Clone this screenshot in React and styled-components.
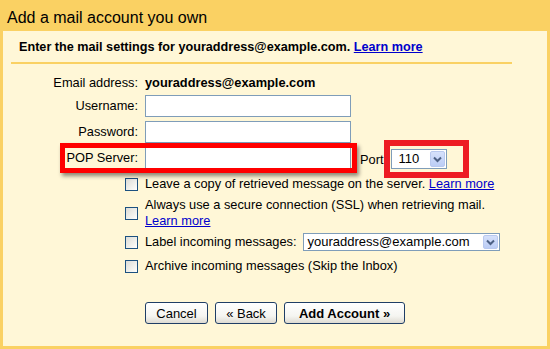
import React from 'react'
import styled, { createGlobalStyle } from 'styled-components'

const GlobalStyle = createGlobalStyle`
   * {
      box-sizing: border-box;
   }
   body {
      margin: 0;
      background: #fad163;
      font-family: 'Liberation Sans', Arial, sans-serif;
      font-size: 12.8px;
      color: #000;
   }
`

function Arrow() {
   return (
      <ArrowBox>
         <svg width="9" height="7" viewBox="0 0 9 7">
            <polyline
               points="1,1.5 4.5,5 8,1.5"
               fill="none"
               stroke="#4d6185"
               strokeWidth="2"
            />
         </svg>
      </ArrowBox>
   )
}

function App() {
   return (
      <Frame>
         <GlobalStyle />
         <Title>Add a mail account you own</Title>
         <Panel>
            <Intro>
               Enter the mail settings for youraddress@example.com.{' '}
               <Link>Learn more</Link>
            </Intro>
            <Form>
               <Row $height={16}>
                  <Label>Email address:</Label>
                  <Value>youraddress@example.com</Value>
               </Row>
               <Row $top={4}>
                  <Label>Username:</Label>
                  <TextInput type="text" />
               </Row>
               <Row $top={4}>
                  <Label>Password:</Label>
                  <TextInput type="password" />
               </Row>
               <Row $top={4}>
                  <PopHighlight>
                     <Label>POP Server:</Label>
                     <TextInput type="text" />
                  </PopHighlight>
                  <PortLabel>Port</PortLabel>
                  <PortHighlight>
                     <Select $width={56} $h={20} $pad={6}>
                        <span>110</span>
                        <Arrow />
                     </Select>
                  </PortHighlight>
               </Row>
               <Row $top={7} $height={16}>
                  <CheckCell>
                     <Check />
                  </CheckCell>
                  <Text>
                     Leave a copy of retrieved message on the server.{' '}
                     <Link $plain>Learn more</Link>
                  </Text>
               </Row>
               <Row $top={5} $height={32}>
                  <CheckCell>
                     <Check />
                  </CheckCell>
                  <Text>
                     Always use a secure connection (SSL) when retrieving mail.
                     <br />
                     <Link $plain>Learn more</Link>
                  </Text>
               </Row>
               <Row $top={4} $height={18}>
                  <CheckCell>
                     <Check />
                  </CheckCell>
                  <Text>Label incoming messages:</Text>
                  <Select $width={197} $h={18} $pad={4} $left={6}>
                     <span>youraddress@example.com</span>
                     <Arrow />
                  </Select>
               </Row>
               <Row $top={7} $height={16}>
                  <CheckCell>
                     <Check />
                  </CheckCell>
                  <Text>Archive incoming messages (Skip the Inbox)</Text>
               </Row>
               <Actions>
                  <Button $width={63}>Cancel</Button>
                  <Button $width={62}>&laquo; Back</Button>
                  <Button $width={121} $primary>
                     Add Account &raquo;
                  </Button>
               </Actions>
            </Form>
         </Panel>
      </Frame>
   )
}

const Frame = styled.div`
   width: 550px;
   height: 349px;
   display: flex;
   flex-direction: column;
   padding: 0 3px 3px;
   background: #fad163;
`

const Title = styled.div`
   padding: 8px 0 3px 4px;
   font-size: 16px;
   line-height: 20px;
`

const Panel = styled.div`
   flex: 1;
   background: #fff7d7;
`

const Intro = styled.div`
   width: 501px;
   margin-left: 8px;
   padding: 8px 0 7px 8px;
   line-height: 16px;
   font-size: 12.65px;
   font-weight: bold;
   border-bottom: 2px solid #fad163;
`

const Link = styled.a`
   color: #00c;
   text-decoration: underline;
   font-weight: ${(p) => (p.$plain ? 'normal' : 'bold')};
   cursor: pointer;
`

const Form = styled.div`
   display: flex;
   flex-direction: column;
   padding-top: 11px;
`

const Row = styled.div`
   display: flex;
   align-items: center;
   height: ${(p) => (p.$height ? `${p.$height}px` : '22px')};
   margin-top: ${(p) => p.$top || 0}px;
   line-height: 16px;
`

const Label = styled.div`
   width: 135px;
   margin-right: 7px;
   text-align: right;
   white-space: nowrap;
`

const Value = styled.div`
   font-weight: bold;
`

const TextInput = styled.input`
   width: 206px;
   height: 22px;
   margin: 0;
   padding: 0 3px;
   border: 1px solid #7f9db9;
   background: #fff;
   font: inherit;
   outline: none;
`

const PopHighlight = styled.div`
   position: relative;
   display: flex;
   align-items: center;

   &::after {
      content: '';
      position: absolute;
      left: 57px;
      right: -6px;
      top: -4px;
      bottom: -4px;
      border: 5px solid #ff0000;
      box-shadow: 2px 3px 4px rgba(0, 0, 0, 0.45);
      pointer-events: none;
   }
`

const PortLabel = styled.div`
   margin: 3px 8px 0 9px;
`

const PortHighlight = styled.div`
   position: relative;
   display: flex;
   margin-top: 2px;

   &::after {
      content: '';
      position: absolute;
      left: -7px;
      right: -22px;
      top: -9px;
      bottom: -9px;
      border: 6px solid #ed1c24;
      pointer-events: none;
   }
`

const Select = styled.div`
   width: ${(p) => p.$width}px;
   height: ${(p) => p.$h}px;
   margin-left: ${(p) => p.$left || 0}px;
   display: flex;
   align-items: center;
   justify-content: space-between;
   padding: 1px 1px 1px ${(p) => p.$pad}px;
   border: 1px solid #7f9db9;
   background: #fff;
   font-size: 13px;
`

const ArrowBox = styled.div`
   width: 15px;
   height: 100%;
   display: flex;
   align-items: center;
   justify-content: center;
   border: 1px solid #b9c9ef;
   border-radius: 2px;
   background: linear-gradient(180deg, #d6e1fb 0%, #bccdf5 100%);
`

const CheckCell = styled.div`
   width: 135px;
   margin-right: 7px;
   display: flex;
   justify-content: flex-end;
`

const Check = styled.span`
   width: 13px;
   height: 13px;
   border: 1px solid #1c5180;
   background: linear-gradient(135deg, #dcdcd7 0%, #f4f4f0 70%, #fff 100%);
`

const Text = styled.div`
   white-space: nowrap;
`

const Actions = styled.div`
   display: flex;
   gap: 7px;
   margin: 28px 0 0 142px;
`

const Button = styled.button`
   width: ${(p) => p.$width}px;
   height: 22px;
   margin: 0;
   padding: 0;
   border: 1px solid #1f3e66;
   border-radius: 3px;
   background: linear-gradient(180deg, #ffffff 0%, #f5f5f1 65%, #dedbd2 100%);
   font-family: inherit;
   font-size: 13px;
   font-weight: ${(p) => (p.$primary ? 'bold' : 'normal')};
   color: #000;
   cursor: pointer;
`

export default App
